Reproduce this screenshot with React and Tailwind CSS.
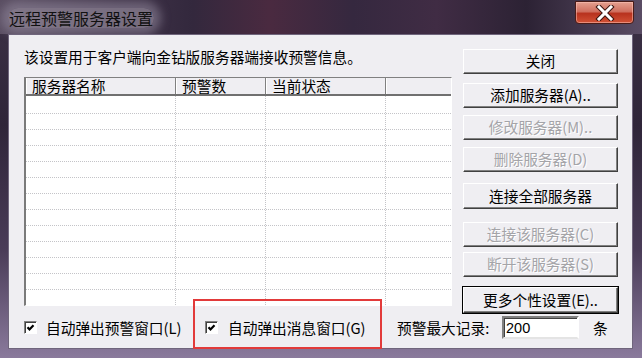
import React from "react";

const btnBase =
  "w-full flex items-center justify-center text-[14.7px] leading-none bg-[#efeef2] border border-t-white border-l-white border-r-[#404040] border-b-[#404040] shadow-[inset_-1px_-1px_#808080]";

const Btn = ({ children, disabled, className }) => (
  <div
    className={
      btnBase +
      " " +
      className +
      (disabled ? " text-[#a4a4a8] [text-shadow:1px_1px_#ffffff]" : " text-black")
    }
  >
    {children}
  </div>
);

const Check = () => (
  <div className="w-[13px] h-[13px] shrink-0 bg-white border border-t-[#808080] border-l-[#808080] border-r-white border-b-white shadow-[inset_1px_1px_#404040] flex items-center justify-center">
    <svg width="9" height="9" viewBox="0 0 9 9">
      <path d="M1.5 4.2 L3.5 6.4 L7.5 2.2" stroke="#000" strokeWidth="2.2" fill="none" />
    </svg>
  </div>
);

const Row = ({ first }) => (
  <div className={"flex shrink-0 border-b border-dotted border-[#c4c4c8] " + (first ? "h-[18px]" : "h-[16px]")}>
    <div className="w-[150px] border-r border-dotted border-[#c4c4c8]" />
    <div className="w-[90px] border-r border-dotted border-[#c4c4c8]" />
    <div className="w-[120px] border-r border-dotted border-[#c4c4c8]" />
    <div className="flex-1" />
  </div>
);

const headCell = "pl-[5px] whitespace-nowrap border-l border-l-white border-r border-r-[#808080]";

const App = () => {
  const rows = Array.from({ length: 13 }, (_, i) => i);

  return (
    <div className="w-[642px] h-[358px] flex flex-col overflow-hidden font-['Noto_Sans_CJK_SC',sans-serif] bg-[linear-gradient(180deg,#3d3246_0%,#2f2539_35%,#4a3c58_70%,#8a7a9c_100%)]">
      {/* title bar */}
      <div className="h-[34px] shrink-0 flex justify-between bg-[linear-gradient(90deg,#5a4e62_0%,#3f3348_18%,#33283d_30%,#4a2a40_42%,#35283f_55%,#402c44_68%,#2c2234_82%,#5a4c64_100%)]">
        <div className="ml-[8px] mt-[8px] h-[20px] px-[1px] text-[16px] leading-[20px] text-[#111] rounded-[10px] bg-[#918799]/70 shadow-[0_0_10px_7px_rgba(150,140,160,0.55)]">
          远程预警服务器设置
        </div>
        <div className="mr-[8px] mt-[1px] w-[59px] h-[23px] rounded-b-[4px] border border-[#4a1c18] bg-[linear-gradient(180deg,#e4a090_0%,#d07060_45%,#b8321e_55%,#d25236_100%)] flex items-center justify-center shadow-[inset_0_0_0_1px_rgba(255,200,190,0.5)]">
          <svg width="20" height="16" viewBox="0 0 20 16">
            <path d="M4 2 L16 14 M16 2 L4 14" stroke="#3a1410" strokeWidth="5" strokeLinecap="square" />
            <path d="M4 2 L16 14 M16 2 L4 14" stroke="#ffffff" strokeWidth="3" strokeLinecap="square" />
          </svg>
        </div>
      </div>

      {/* client area */}
      <div className="relative ml-[8px] mr-[9px] h-[315px] border border-[#6f657c] bg-[#efeef2] flex flex-col">
        <div className="flex">
          {/* left column */}
          <div className="ml-[15px] w-[428px] flex flex-col">
            <p className="mt-[13px] h-[18px] text-[14.7px] leading-[18px] text-black whitespace-nowrap">
              该设置用于客户端向金钻版服务器端接收预警信息。
            </p>
            <div className="mt-[11px] h-[229px] flex flex-col border-t border-l-2 border-t-[#808080] border-l-[#7a7a7a] border-r border-r-white border-b border-b-white bg-white">
              <div className="h-[18px] shrink-0 flex bg-[#efeef2] border-b-2 border-b-[#707070] text-[14.7px] leading-[16px] text-black">
                <div className={"w-[150px] " + headCell}>服务器名称</div>
                <div className={"w-[90px] " + headCell}>预警数</div>
                <div className={"w-[120px] " + headCell}>当前状态</div>
                <div className="flex-1 border-l border-l-white" />
              </div>
              <div className="flex-1 flex flex-col overflow-hidden">
                {rows.map((i) => (
                  <Row key={i} first={i === 0} />
                ))}
              </div>
            </div>
          </div>

          {/* right column */}
          <div className="ml-[11px] w-[155px] flex flex-col">
            <Btn className="mt-[14px] h-[25px]">关闭</Btn>
            <Btn className="mt-[9px] h-[25px]">添加服务器(A)..</Btn>
            <Btn className="mt-[7px] h-[25px]" disabled>修改服务器(M)..</Btn>
            <Btn className="mt-[7px] h-[25px]" disabled>删除服务器(D)</Btn>
            <Btn className="mt-[11px] h-[26px]">连接全部服务器</Btn>
            <Btn className="mt-[13px] h-[25px]" disabled>连接该服务器(C)</Btn>
            <Btn className="mt-[5px] h-[25px]" disabled>断开该服务器(S)</Btn>
            <Btn className="mt-[10px] h-[26px] outline outline-1 outline-black">更多个性设置(E)..</Btn>
          </div>
        </div>

        {/* bottom row */}
        <div className="mt-[3px] h-[23px] flex items-center pl-[15px] text-[14.7px] leading-[18px] text-black">
          <div className="w-[181px] flex items-center">
            <Check />
            <span className="ml-[9px] whitespace-nowrap">自动弹出预警窗口(L)</span>
          </div>
          <div className="w-[192px] flex items-center">
            <Check />
            <span className="ml-[10px] whitespace-nowrap">自动弹出消息窗口(G)</span>
          </div>
          <span className="w-[105px] whitespace-nowrap">预警最大记录:</span>
          <div className="w-[77px] h-[23px] bg-white border-2 border-t-[#808080] border-l-[#808080] border-r-white border-b-[#e4e4e4] shadow-[inset_1px_1px_#404040] pl-[2px] flex items-center font-['Liberation_Sans',sans-serif] text-[14.5px]">
            200
          </div>
          <span className="ml-[14px]">条</span>
        </div>

        {/* red annotation */}
        <div className="absolute left-[184px] top-[264px] w-[189px] h-[50px] border-2 border-[#e23a3a]" />
      </div>
    </div>
  );
};

export default App;
